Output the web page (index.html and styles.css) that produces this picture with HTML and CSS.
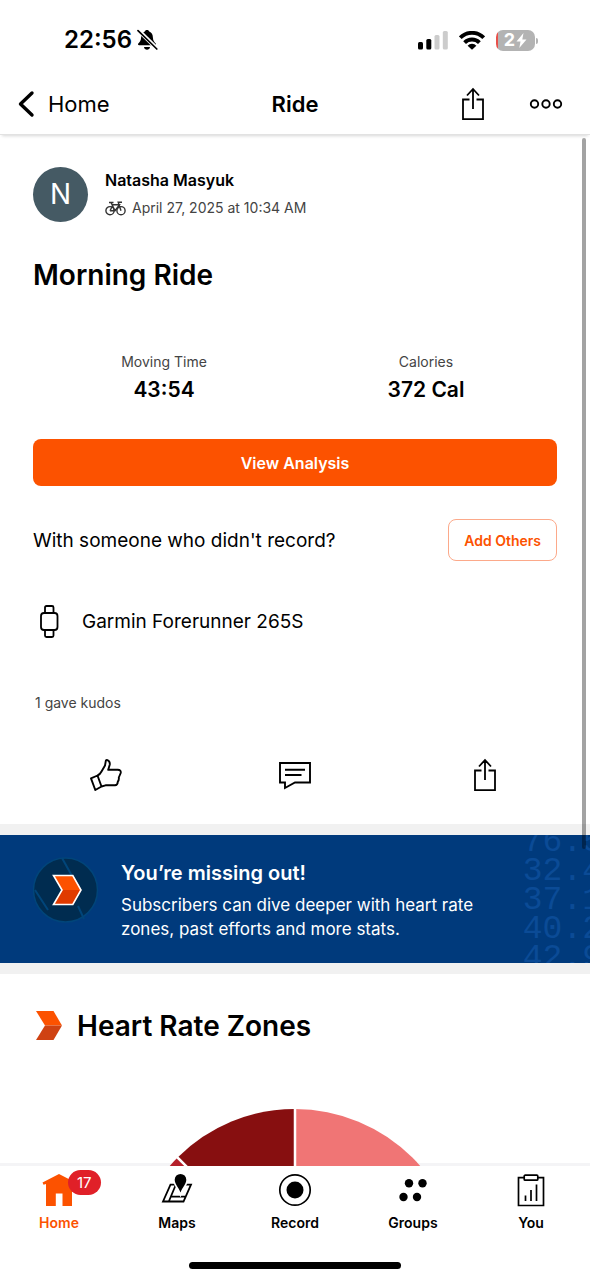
FILE: index.html
```html
<!DOCTYPE html>
<html lang="en">
<head>
<meta charset="utf-8">
<meta name="viewport" content="width=device-width, initial-scale=1">
<title>Ride</title>
<link rel="stylesheet" href="styles.css">
</head>
<body>
<div class="app">
  <div class="status">
    <div class="status-left">
      <span>22:56</span>
      <svg width="21" height="22" viewBox="0 0 21 22" aria-hidden="true">
        <path d="M10 1c-1.300 0-2 .7-2.200 1.400C5.200 3.400 4.200 5.500 4.100 8.500 4 12 2.500 13 1.300 14.500c-.6.8-.2 1.700.8 1.700h15.800c1 0 1.400-.9.8-1.700-1.200-1.500-2.700-2.500-2.800-6-.1-3-1.100-5.100-3.700-6.100C12 1.700 11.300 1 10 1z"/>
        <path d="M7 18h6c-.2 1.700-1.500 2.700-3 2.700S7.200 19.700 7 18z"/>
        <path d="M1.500 1.500 20 19.500" stroke="#fff" stroke-width="4"/>
        <path d="M1 1.700 19.800 20" stroke="#000" stroke-width="1.700" stroke-linecap="round"/>
      </svg>
    </div>
    <div class="status-right">
      <svg width="30" height="19" viewBox="0 0 30 19" aria-hidden="true">
        <rect x="0" y="11" width="5" height="7.500" rx="1.500"/>
        <rect x="8.300" y="8" width="5" height="10.500" rx="1.500"/>
        <rect x="16.500" y="4" width="5" height="14.500" rx="1.500" fill="#ccc"/>
        <rect x="24.800" y="0" width="5" height="18.500" rx="1.500" fill="#ccc"/>
      </svg>
      <svg width="26" height="19" viewBox="0 0 26 19" aria-hidden="true" fill="none" stroke="#000" stroke-width="3.900">
        <path d="M1.300 6.700a16.500 16.500 0 0 1 23.400 0"/>
        <path d="M5.600 11.600a10.500 10.500 0 0 1 14.800 0"/>
        <path d="M13 18.800 8.600 14.700a6 6 0 0 1 8.800 0z" fill="#000" stroke="none"/>
      </svg>
      <span class="battery">2<svg width="11" height="15" viewBox="0 0 11 15" aria-hidden="true"><path d="M7.500 0 .5 8.500h4L3.300 15l7.200-8.600H6.300z" fill="#fff"/></svg></span>
    </div>
  </div>

  <header class="nav">
    <a class="back" href="#home">
      <svg width="17" height="28" viewBox="0 0 17 28" aria-hidden="true" fill="none" stroke="#000" stroke-width="3.400" stroke-linecap="round" stroke-linejoin="round"><path d="M14 3 2.500 14 14 25"/></svg>
      Home
    </a>
    <h1 class="nav-title">Ride</h1>
    <div class="nav-actions">
      <button class="icon-button" type="button" aria-label="Share">
        <svg width="24" height="34" viewBox="0 0 24 34" aria-hidden="true" fill="none" stroke="#000" stroke-width="1.800"><path d="M8.500 12.500H2v19.700h20V12.500h-6.500M12 22V2M6 8.500 12 2l6 6.500"/></svg>
      </button>
      <button class="icon-button" type="button" aria-label="More">
        <svg width="34" height="12" viewBox="0 0 34 12" aria-hidden="true" fill="none" stroke="#000" stroke-width="1.900"><circle cx="5.500" cy="6" r="3.700"/><circle cx="17" cy="6" r="3.700"/><circle cx="28.500" cy="6" r="3.700"/></svg>
      </button>
    </div>
  </header>

  <main class="content">
    <section class="activity">
      <div class="athlete">
        <span class="avatar">N</span>
        <div>
          <div class="athlete-name">Natasha Masyuk</div>
          <div class="athlete-date">
            <svg width="21" height="15" viewBox="0 0 21 15" aria-hidden="true" fill="none" stroke="#333" stroke-width="1.400"><circle cx="5" cy="9.700" r="4.100"/><circle cx="16" cy="9.700" r="4.100"/><path d="M5 9.700h5l4.500-6H7.200M10 9.700 6 1.500M4 1.500h4.500M5 9.700l2.500-5M16 9.700 13.200 1.200H17"/></svg>
            <span>April 27, 2025 at 10:34 AM</span>
          </div>
        </div>
      </div>

      <h2 class="title">Morning Ride</h2>

      <dl class="stats">
        <div><dt>Moving Time</dt><dd>43:54</dd></div>
        <div><dt>Calories</dt><dd>372 Cal</dd></div>
      </dl>

      <button class="primary" type="button">View Analysis</button>

      <div class="others">
        <span class="row-text">With someone who didn't record?</span>
        <button class="outline" type="button">Add Others</button>
      </div>

      <div class="device">
        <svg width="33" height="34" viewBox="0 0 33 34" aria-hidden="true" fill="none" stroke="#000" stroke-width="1.800"><rect x="8" y="9" width="16.500" height="17" rx="3"/><path d="M12 9V3.500Q12 2 13.500 2h5.500q1.500 0 1.500 1.500V9M12 26v5.500q0 1.500 1.500 1.500h5.500q1.500 0 1.500-1.500V26"/></svg>
        <span class="row-text">Garmin Forerunner 265S</span>
      </div>

      <div class="kudos">1 gave kudos</div>
    </section>

    <div class="actions">
      <button class="icon-button" type="button" aria-label="Give kudos">
        <svg width="34" height="34" viewBox="0 0 34 34" aria-hidden="true" fill="none" stroke="#000" stroke-width="1.900" stroke-linejoin="round"><path d="M3 20.300 9.500 17.500l4 11L7.300 32z M9.500 17.500Q12 16.500 13.500 13.500L17 7.500l.8-4.500q.3-1.300 1.600-.8 2.600 1 2.400 4.200l-1.600 5.400h9.500q3.600.2 3 3.200l-1.900 4.500q.4 2.600-1 4.200-.2 3.500-2.800 3.600h-9.500l-4 1.200"/></svg>
      </button>
      <button class="icon-button" type="button" aria-label="Comment">
        <svg width="34" height="34" viewBox="0 0 34 34" aria-hidden="true" fill="none" stroke="#000" stroke-width="1.900"><path d="M2 5h30v19.500H17L7 30v-5.500H2zM7 11.700h20M7 17h16.500"/></svg>
      </button>
      <button class="icon-button" type="button" aria-label="Share activity">
        <svg width="24" height="34" viewBox="0 0 24 34" aria-hidden="true" fill="none" stroke="#000" stroke-width="1.800"><path d="M8.500 12.500H2v19.700h20V12.500h-6.500M12 22V2M6 8.500 12 2l6 6.500"/></svg>
      </button>
    </div>

    <section class="banner">
      <svg width="66" height="66" viewBox="0 0 66 66" aria-hidden="true">
        <circle cx="32.500" cy="33" r="32" fill="#002c50" stroke="#00457a" stroke-width="1.500"/>
        <path d="M29 1 38.500 18M45 49l6 13M2 33l13 20" stroke="#00457a" stroke-width="2"/>
        <path d="M20 18h20l8.500 15H29z" fill="#fc5200"/>
        <path d="M29 33h19.500L40 48H20z" fill="#e03a00"/>
        <path d="M20.500 18.500h19.300L48 33l-8.200 14.500H20.500L29 33z" fill="none" stroke="#fff" stroke-width="1.600"/>
      </svg>
      <div class="banner-text">
        <h3>You’re missing out!</h3>
        <p>Subscribers can dive deeper with heart rate zones, past efforts and more stats.</p>
      </div>
      <div class="banner-digits" aria-hidden="true">76.5<br>32.4<br>37.1<br>40.2<br>42.9</div>
    </section>

    <section class="zones">
      <h2 class="zones-title">
        <svg width="27" height="30" viewBox="0 0 27 30" aria-hidden="true"><path d="M0 0h17.500L26 14.500H9z" fill="#fc5200"/><path d="M9 14.500h17L17.500 29H0z" fill="#cf4212"/></svg>
        Heart Rate Zones
      </h2>
      <svg class="pie" width="332" height="332" viewBox="-166 -166 332 332" role="img" aria-label="Heart rate zones chart">
        <path d="M0 0V-166A166 166 0 0 1 166 0z" fill="#f07575"/>
        <path d="M0 0-117.400-117.400A166 166 0 0 1 0-166z" fill="#870f10"/>
        <path d="M0 0H-166A166 166 0 0 1-117.400-117.400z" fill="#b5202a"/>
        <path d="M0-166V0M0 0-120-120" stroke="#fff" stroke-width="2.500"/>
      </svg>
    </section>
    <div class="scrollbar"></div>
  </main>

  <nav class="tabs">
    <a class="tab active" href="#home">
      <span class="tab-icon">
        <svg width="34" height="34" viewBox="0 0 34 34" aria-hidden="true" fill="#fc5200"><path d="M.5 9.500 17 1l16.500 8.500-1 2.300-2.500-.8v22H20.500V20.500h-6.700V33H4V11l-2.500.8z"/></svg>
        <span class="count">17</span>
      </span>
      Home
    </a>
    <a class="tab" href="#maps">
      <span class="tab-icon"><svg width="34" height="34" viewBox="0 0 34 34" aria-hidden="true"><path d="M10.500 11.700H31L23.500 28.500H3zM15.500 12.500 9 28M11.500 23.700H26" fill="none" stroke="#000" stroke-width="1.800"/><path d="M20.500 19.500C18.500 14 14.700 11 14.700 6.700a5.800 5.800 0 0 1 11.600 0c0 4.300-3.800 7.300-5.800 12.800z" stroke="#fff" stroke-width="3.500" paint-order="stroke"/></svg></span>
      Maps
    </a>
    <a class="tab" href="#record">
      <span class="tab-icon"><svg width="34" height="34" viewBox="0 0 34 34" aria-hidden="true"><circle cx="17" cy="17" r="15.200" fill="none" stroke="#000" stroke-width="1.700"/><circle cx="17" cy="17" r="8.500"/></svg></span>
      Record
    </a>
    <a class="tab" href="#groups">
      <span class="tab-icon"><svg width="34" height="34" viewBox="0 0 34 34" aria-hidden="true"><circle cx="13" cy="10.300" r="4.200"/><circle cx="26.500" cy="10.300" r="4.200"/><circle cx="7.500" cy="24" r="4.200"/><circle cx="21" cy="24" r="4.200"/></svg></span>
      Groups
    </a>
    <a class="tab" href="#you">
      <span class="tab-icon"><svg width="34" height="34" viewBox="0 0 34 34" aria-hidden="true" fill="none" stroke="#000" stroke-width="1.700"><path d="M10 4.700H4.500v27.800h25V4.700H24M11.500 22.500V28M17 17v11M22.500 11.500V28"/><rect x="10.200" y="2.200" width="13.600" height="5" rx="1"/></svg></span>
      You
    </a>
  </nav>
  <div class="home-area"><span class="home-indicator"></span></div>
</div>
</body>
</html>
```
FILE: styles.css
```css
* {
  box-sizing: border-box;
}

body,
h1,
h2,
h3,
p,
dl,
dd {
  margin: 0;
}

body {
  font-family: Inter, "Liberation Sans", sans-serif;
  color: #000;
  background: #fff;
}

svg {
  display: block;
  flex: none;
}

button {
  font: inherit;
  cursor: pointer;
}

a {
  color: inherit;
  text-decoration: none;
}

.app {
  display: flex;
  flex-direction: column;
  height: 100vh;
}

/* Status bar */
.status {
  display: flex;
  justify-content: space-between;
  align-items: center;
  padding: 24px 55px 0 64px;
  line-height: 32px;
}

.status-left {
  display: flex;
  align-items: center;
  gap: 5px;
  font-size: 24px;
  font-weight: 600;
}

.status-right {
  display: flex;
  align-items: center;
  gap: 11px;
}

.battery {
  position: relative;
  display: flex;
  align-items: center;
  justify-content: center;
  gap: 1px;
  width: 39px;
  height: 21px;
  border-radius: 7px;
  background: linear-gradient(to right, #e8504a 2px, #b3b3b3 2px);
  color: #fff;
  font-size: 18px;
  font-weight: 700;
}

.battery::after {
  content: "";
  position: absolute;
  left: 40px;
  top: 8px;
  width: 2px;
  height: 6px;
  border-radius: 0 2px 2px 0;
  background: #b3b3b3;
}

/* Navigation bar */
.nav {
  position: relative;
  z-index: 1;
  display: grid;
  grid-template-columns: 1fr auto 1fr;
  align-items: center;
  padding: 18px 18px 0;
  height: 79px;
  border-bottom: 1px solid #e2e2e2;
  box-shadow: 0 3px 3px -2px rgba(0, 0, 0, 0.16);
}

.back {
  display: flex;
  align-items: center;
  gap: 13px;
  font-size: 22px;
}

.nav-title {
  font-size: 22px;
  font-weight: 600;
}

.nav-actions {
  display: flex;
  justify-content: flex-end;
  align-items: center;
  gap: 44px;
  padding-right: 9px;
}

.icon-button {
  padding: 0;
  border: 0;
  background: none;
}

/* Scrolling content */
.content {
  position: relative;
  flex: 1;
  min-height: 0;
  overflow: hidden;
  background: linear-gradient(to top, #f4f4f6 3px, #fff 3px);
}

.scrollbar {
  position: absolute;
  top: 3px;
  right: 4px;
  width: 4px;
  height: 69%;
  border-radius: 2px;
  background: rgba(0, 0, 0, 0.36);
}

.activity {
  padding: 31px 33px 0;
}

.athlete {
  display: flex;
  align-items: center;
  gap: 17px;
}

.avatar {
  display: flex;
  align-items: center;
  justify-content: center;
  width: 55px;
  height: 55px;
  border-radius: 50%;
  background: #455a64;
  color: #fff;
  font-size: 28px;
}

.athlete-name {
  font-size: 16px;
  font-weight: 600;
  line-height: 28px;
}

.athlete-date {
  display: flex;
  align-items: center;
  gap: 6px;
  color: #444;
  font-size: 14px;
  line-height: 28px;
}

.title {
  margin-top: 33px;
  font-size: 28px;
  font-weight: 600;
  line-height: 40px;
}

.stats {
  display: grid;
  grid-template-columns: 1fr 1fr;
  margin-top: 55px;
  text-align: center;
}

.stats dt {
  color: #444;
  font-size: 14px;
  line-height: 24px;
}

.stats dd {
  font-size: 21px;
  font-weight: 600;
  line-height: 32px;
}

.primary {
  width: 100%;
  height: 47px;
  margin-top: 33px;
  border: 0;
  border-radius: 8px;
  background: #fc5200;
  color: #fff;
  font-size: 16px;
  font-weight: 600;
}

.others {
  display: flex;
  align-items: center;
  justify-content: space-between;
  margin-top: 33px;
}

.row-text {
  font-size: 19px;
}

.outline {
  height: 42px;
  padding: 0 15px;
  border: 1px solid #fca98a;
  border-radius: 8px;
  background: #fff;
  color: #fc5200;
  font-size: 14px;
  font-weight: 600;
}

.device {
  display: flex;
  align-items: center;
  gap: 16px;
  margin-top: 43px;
}

.kudos {
  margin-top: 53px;
  padding-left: 2px;
  color: #444;
  font-size: 14px;
  line-height: 24px;
}

.actions {
  display: grid;
  grid-template-columns: 1fr 1fr 1fr;
  justify-items: center;
  padding: 43px 10px 32px;
}

/* Subscription banner */
.banner {
  position: relative;
  display: flex;
  gap: 22px;
  margin: 11px 0;
  padding: 22px 33px;
  overflow: hidden;
  outline: 11px solid #f1f1f1;
  background: #003a7c;
  color: #fff;
}

.banner-text {
  max-width: 370px;
}

.banner h3 {
  font-size: 20px;
  font-weight: 600;
  line-height: 32px;
}

.banner p {
  margin-top: 4px;
  font-size: 17px;
  line-height: 24px;
}

.banner-digits {
  position: absolute;
  top: -7px;
  right: -12px;
  color: #0b4b96;
  font-family: "Liberation Mono", monospace;
  font-size: 33px;
  line-height: 29px;
}

/* Heart rate zones */
.zones {
  padding: 32px 36px 0;
}

.zones-title {
  display: flex;
  align-items: center;
  gap: 14px;
  font-size: 28px;
  font-weight: 600;
  line-height: 40px;
}

.pie {
  margin: 63px auto 0;
}

/* Tab bar */
.tabs {
  display: grid;
  grid-template-columns: repeat(5, 1fr);
  padding-top: 7px;
}

.tab {
  display: flex;
  flex-direction: column;
  align-items: center;
  gap: 4px;
  font-size: 14px;
  font-weight: 600;
  line-height: 24px;
}

.tab.active {
  color: #fc5200;
}

.tab-icon {
  position: relative;
}

.count {
  position: absolute;
  left: 26px;
  top: -3px;
  padding: 0 9px;
  border-radius: 13px;
  background: #e02028;
  color: #fff;
  font-size: 15px;
  font-weight: 400;
  line-height: 25px;
}

.home-area {
  display: flex;
  justify-content: center;
  padding: 27px 0 11px;
}

.home-indicator {
  width: 36%;
  height: 7px;
  border-radius: 4px;
  background: #000;
}
```
